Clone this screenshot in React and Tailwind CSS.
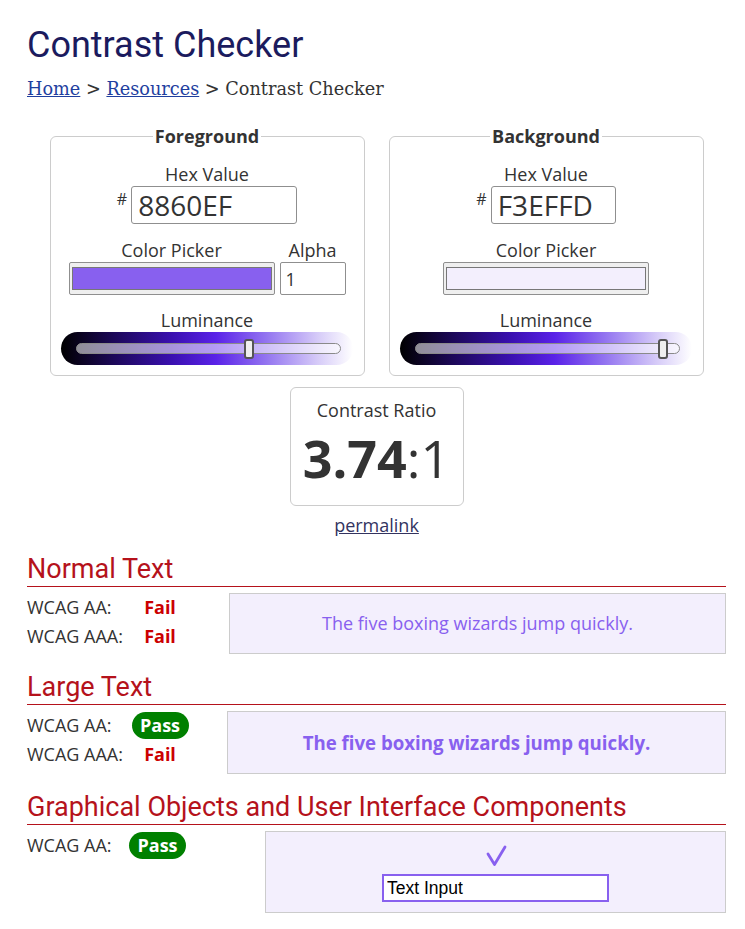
function Slider({ thumb }) {
  return (
    <div className="mx-auto flex h-[33px] w-[292px] items-center rounded-full bg-[linear-gradient(to_right,#000_0%,#1c0858_18%,#3a10b0_38%,#5a22e8_53%,#9273f0_70%,#d6cbf8_88%,#fff_100%)] pl-[15px] pr-[12px]">
      <div className="relative h-[11px] flex-1 rounded-full border border-[#8a8a8a] bg-white/55">
        <div className={"absolute top-1/2 h-[20px] w-[10px] -translate-y-1/2 rounded-[3px] border-2 border-[#555] bg-[#efefef] " + thumb} />
      </div>
    </div>
  );
}

function Picker({ color }) {
  return (
    <div className="flex h-[33px] w-[206px] rounded-[2px] border border-[#8f8f8f] bg-[#efefef] px-[2px] py-[4px]">
      <div className="flex-1 border border-[#777]" style={{ background: color }} />
    </div>
  );
}

function ColorSet({ title, hex, hexWidth, color, alpha, thumb }) {
  return (
    <fieldset className="h-[252px] w-[315px] rounded-[6px] border border-[#ccc] pb-[9px]">
      <legend className="mx-auto px-[2px] text-[18px] font-bold leading-[24px] text-[#333]">{title}</legend>
      <div className="mt-[15px] text-center leading-[22px]">Hex Value</div>
      <div className="mt-[1px] flex justify-center">
        <span className="mr-[4px] mt-[5px] text-[16px] leading-none">#</span>
        <input
          className={"h-[38px] rounded-[3px] border border-[#8f8f8f] pl-[6px] text-[28px] text-[#333] outline-none " + hexWidth}
          defaultValue={hex}
        />
      </div>
      <div className="mt-[15px] flex justify-center gap-[5px]">
        <div className="flex flex-col items-center">
          <div className="leading-[22px]">Color Picker</div>
          <div className="mt-[1px]">
            <Picker color={color} />
          </div>
        </div>
        {alpha && (
          <div className="flex flex-col items-center">
            <div className="leading-[22px]">Alpha</div>
            <input
              className="mt-[1px] h-[33px] w-[66px] rounded-[2px] border border-[#8f8f8f] pl-[5px] text-[18px] text-[#333] outline-none"
              defaultValue="1"
            />
          </div>
        )}
      </div>
      <div className="mt-[14px] text-center leading-[22px]">Luminance</div>
      <div className="mt-[1px]">
        <Slider thumb={thumb} />
      </div>
    </fieldset>
  );
}

function Heading({ children }) {
  return (
    <h2 className="border-b border-[#b5121b] pb-[2px] font-['Roboto',sans-serif] text-[27px] leading-[30px] text-[#b5121b]">
      {children}
    </h2>
  );
}

function Fail() {
  return <span className="font-bold text-[#cc0000]">Fail</span>;
}

function Pass() {
  return (
    <span className="inline-flex h-[27px] w-[57px] items-center justify-center rounded-full bg-[#008000] font-bold text-white">
      Pass
    </span>
  );
}

function Row({ label, children }) {
  return (
    <div className="flex h-[29px] items-center">
      <div className="w-[104px]">{label}</div>
      <div className="flex w-[58px] justify-center">{children}</div>
    </div>
  );
}

export default function App() {
  return (
    <div className="min-h-[929px] bg-white pl-[27px] pr-[19px] pt-[25px] font-['Open_Sans',sans-serif] text-[18px] text-[#333]">
      <h1 className="font-['Roboto',sans-serif] text-[36px] leading-[40px] text-[#1b1b5e]">Contrast Checker</h1>
      <nav className="mt-[12px] font-['DejaVu_Serif',serif] text-[17.7px] leading-[24px] text-[#333]">
        <a href="#" className="text-[#1f3f9f] underline">Home</a>
        {" > "}
        <a href="#" className="text-[#1f3f9f] underline">Resources</a>
        {" > Contrast Checker"}
      </nav>

      <div className="mt-[23px] flex justify-center gap-[24px]">
        <ColorSet title="Foreground" hex="8860EF" hexWidth="w-[166px]" color="#8860ef" alpha thumb="left-[167px]" />
        <ColorSet title="Background" hex="F3EFFD" hexWidth="w-[125px]" color="#f3effd" thumb="left-[242px]" />
      </div>

      <div className="mt-[11px] flex flex-col items-center">
        <div className="flex h-[119px] w-[174px] flex-col items-center rounded-[6px] border border-[#ccc] pt-[10px]">
          <div className="leading-[24px]">Contrast Ratio</div>
          <div className="mt-[6px] text-[52px] leading-[60px]">
            <span className="font-bold">3.74</span>:1
          </div>
        </div>
        <a href="#" className="mt-[7px] leading-[24px] text-[#33335f] underline">permalink</a>
      </div>

      <div className="mt-[17px]">
        <Heading>Normal Text</Heading>
        <div className="mt-[6px] flex">
          <div className="w-[202px]">
            <Row label="WCAG AA:"><Fail /></Row>
            <Row label="WCAG AAA:"><Fail /></Row>
          </div>
          <div className="flex h-[61px] flex-1 items-center justify-center border border-[#ccc] bg-[#f3effd] text-[#8860ef]">
            The five boxing wizards jump quickly.
          </div>
        </div>
      </div>

      <div className="mt-[18px]">
        <Heading>Large Text</Heading>
        <div className="mt-[6px] flex">
          <div className="w-[200px]">
            <Row label="WCAG AA:"><Pass /></Row>
            <Row label="WCAG AAA:"><Fail /></Row>
          </div>
          <div className="flex h-[63px] flex-1 items-center justify-center border border-[#ccc] bg-[#f3effd] text-[18.67px] font-bold text-[#8860ef]">
            The five boxing wizards jump quickly.
          </div>
        </div>
      </div>

      <div className="mt-[18px]">
        <Heading>Graphical Objects and User Interface Components</Heading>
        <div className="mt-[6px] flex">
          <div className="w-[238px]">
            <div className="flex h-[29px] items-center">
              <div className="w-[102px]">WCAG AA:</div>
              <Pass />
            </div>
          </div>
          <div className="flex h-[82px] flex-1 flex-col items-center border border-[#ccc] bg-[#f3effd] pt-[13px]">
            <svg width="21" height="22" viewBox="0 0 21 22" className="ml-[1px]">
              <path d="M2 9 L8.5 19.5 L19 2" fill="none" stroke="#8860ef" strokeWidth="2.8" strokeLinecap="round" strokeLinejoin="round" />
            </svg>
            <input
              className="mt-[7px] h-[28px] w-[227px] border-2 border-[#8860ef] bg-white pl-[3px] font-['Liberation_Sans',sans-serif] text-[17.5px] text-black outline-none"
              defaultValue="Text Input"
            />
          </div>
        </div>
      </div>
    </div>
  );
}
